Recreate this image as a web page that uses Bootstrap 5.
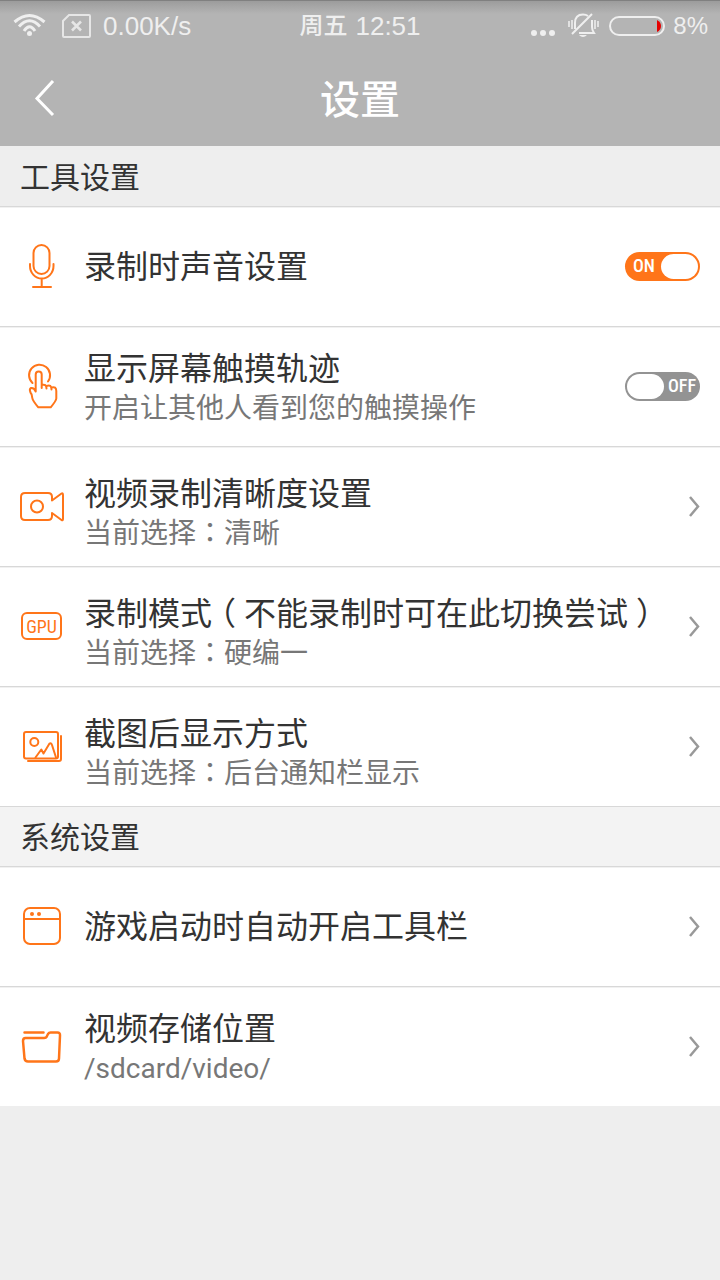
<!DOCTYPE html>
<html lang="zh-CN">
<head>
<meta charset="utf-8">
<meta name="viewport" content="width=device-width, initial-scale=1">
<title>设置</title>
<link href="https://cdn.jsdelivr.net/npm/bootstrap@5.3.0/dist/css/bootstrap.min.css" rel="stylesheet">
<style>
  :root { --accent: #ff7519; --ink: #333; --line: #d8d8d8; }
  body { background: #eee; color: var(--ink); font-family: Roboto, "Noto Sans CJK SC", sans-serif; }
  .top-area { background: linear-gradient(#808080 0, #808080 1px, #9c9c9c 1px, #b4b4b4 14px); color: #fff; }
  .status-bar { height: 52px; padding: 0 12px; color: #efefef; font: 26px/32px "Liberation Sans", "Noto Sans CJK SC", sans-serif; }
  .status-day, .battery-level { font-size: 24px; }
  .status-day { font-weight: 500; }
  .toolbar { height: 94px; padding: 0 24px; }
  .toolbar h1 { padding-top: 4px; font-size: 40px; line-height: 48px; font-weight: 500; }
  .side-slot { width: 40px; }
  .section-title { height: 60px; padding: 3px 20px 0; font-size: 30px; line-height: 40px; font-weight: 400; }
  .section-title.first { height: 61px; }
  .section-title.pale { background: #f3f3f3; }
  .section-title, .entry { border-bottom: 1px solid var(--line); }
  .entry { min-height: 120px; padding-right: 20px; background: #fff; box-shadow: inset 0 1px #f1f1f1; color: var(--ink); text-decoration: none; }
  li:last-child > .entry.last { min-height: 119px; border-bottom: 0; }
  .entry-icon { width: 44px; height: 48px; margin: 0 20px; flex: none; fill: none; stroke: var(--accent); stroke-width: 2; stroke-linecap: round; stroke-linejoin: round; }
  .entry-icon text { font: 18px "Roboto Condensed", Roboto, sans-serif; fill: var(--accent); stroke: none; }
  .entry-title { font-size: 32px; line-height: 40px; }
  .entry-note { font-size: 28px; line-height: 40px; color: #777; }
  .two-line { padding-top: 4px; }
  .lowered { padding-top: 14px; }
  .mid-mark { font-family: Roboto, "Noto Sans CJK TC", sans-serif; }
  .bracket { display: inline-block; width: 1em; text-align: center; font-feature-settings: "halt"; }
  .chevron { flex: none; fill: none; stroke: #999; stroke-width: 2.5; }
  .toggle { flex: none; width: 75px; height: 29px; }
  .toggle input { display: block; appearance: none; width: 75px; height: 29px; margin: 0; border-radius: 15px; background: #939393; cursor: pointer; overflow: hidden; }
  .toggle input:checked { background: var(--accent); }
  .toggle input::before { content: ""; display: block; width: 37px; height: 25px; margin: 2px; border-radius: 13px; background: #fff; }
  .toggle input:checked::before { margin-left: 36px; }
  .toggle span { position: absolute; top: 0; right: 4px; color: #fff; font: 500 18px/28px "Roboto Condensed", "Liberation Sans Narrow", sans-serif; pointer-events: none; }
  .toggle input:checked + span { right: auto; left: 8px; }
</style>
</head>
<body>
<header class="top-area">
  <div class="status-bar d-flex align-items-center">
    <div class="d-flex align-items-center col">
      <svg width="34" height="26" viewBox="0 0 34 26" fill="none" stroke="#efefef" stroke-width="3" aria-hidden="true">
        <path d="M2.500 9Q17.500-4 32.500 9M7 13.500Q17.500 2 28 13.500M12 18Q17.500 9.500 23 18"/><circle cx="17.500" cy="20.500" r="2.500" fill="#efefef" stroke="none"/>
      </svg>
      <svg class="ms-3 me-2" width="29" height="24" viewBox="0 0 29 24" fill="none" stroke="#e6e6e6" stroke-width="2" aria-hidden="true">
        <path d="M7 1H27Q28 1 28 2V22Q28 23 27 23H2Q1 23 1 22V7Z"/><path d="M10 7.500l9 9M19 7.500l-9 9" stroke-width="2.500"/>
      </svg>
      <span class="ms-1">0.00K/s</span>
    </div>
    <div class="d-flex gap-2 align-items-center"><span class="status-day">周五</span><span>12:51</span></div>
    <div class="d-flex align-items-center justify-content-end col">
      <svg width="26" height="26" viewBox="0 0 26 26" fill="#efefef" aria-hidden="true"><circle cx="4" cy="20" r="3"/><circle cx="13" cy="20" r="3"/><circle cx="22" cy="20" r="3"/></svg>
      <svg class="mx-2" width="37" height="26" viewBox="0 0 37 26" fill="none" stroke="#efefef" stroke-width="2" aria-hidden="true">
        <path d="M11 16V10Q11 1.500 19 1.500Q22 1.500 24 3M28 7V14Q28 17 30 20H15M8 21L28 1"/><path d="M5 8v6M8 7v9M31 7v9M34 8v6" stroke-width="1.500"/><path d="M15 22H23Q19 26 15 22Z" fill="#efefef" stroke="none"/>
      </svg>
      <svg width="56" height="20" viewBox="0 0 56 20" fill="none" aria-hidden="true"><rect x="1" y="1" width="54" height="18" rx="9" stroke="#efefef" stroke-width="2"/><path d="M48 4Q52 6 52 10T48 16Z" fill="#e60000"/></svg>
      <span class="battery-level ms-2">8%</span>
    </div>
  </div>
  <nav class="toolbar d-flex align-items-center justify-content-between" aria-label="标题栏">
    <button type="button" class="btn p-0 border-0 side-slot" aria-label="返回">
      <svg class="d-block mx-auto" width="22" height="38" viewBox="0 0 22 38" fill="none" stroke="#fff" stroke-width="3"><path d="M20 1L4 18.500L20 35"/></svg>
    </button>
    <h1 class="m-0">设置</h1>
    <span class="side-slot"></span>
  </nav>
</header>
<main>
  <h2 class="section-title first d-flex align-items-center m-0">工具设置</h2>
  <ul class="list-unstyled m-0">
    <li>
      <div class="entry d-flex align-items-center">
        <svg class="entry-icon" viewBox="0 0 44 48" aria-hidden="true"><rect x="13.500" y="2" width="16" height="29" rx="8"/><path d="M10 21v2a11.700 12.500 0 0 0 23.500 0v-2M21.700 36v8M13 44h18"/></svg>
        <label class="entry-title flex-fill" for="sound">录制时声音设置</label>
        <div class="toggle position-relative"><input type="checkbox" role="switch" id="sound" checked><span>ON</span></div>
      </div>
    </li>
    <li>
      <div class="entry d-flex align-items-center">
        <svg class="entry-icon" viewBox="0 0 44 48" aria-hidden="true"><path d="M12.500 20A10.500 10.500 0 1 1 28 18.500"/><path d="M15.700 28.500V11.500a3 3 0 0 1 6 0V25M21.700 22Q26.500 20.500 26.500 25.500M26.500 23Q31.500 21 31.500 26.500M31.500 24.500Q36.300 23 36.300 28V35.500Q36 38 30.700 44.300H18.300Q12.500 37.500 12.300 35Q12.300 31.500 10.500 29.500Q9 26 11 25Q14 24.500 15.700 28.500"/></svg>
        <label class="flex-fill two-line" for="touch"><span class="entry-title d-block">显示屏幕触摸轨迹</span><span class="entry-note d-block">开启让其他人看到您的触摸操作</span></label>
        <div class="toggle position-relative"><input type="checkbox" role="switch" id="touch"><span>OFF</span></div>
      </div>
    </li>
    <li>
      <a href="#quality" class="entry d-flex align-items-center">
        <svg class="entry-icon" viewBox="0 0 44 48" aria-hidden="true"><path d="M32 17.500V14Q32 10 28 10H5Q1 10 1 14V33Q1 37 5 37H28Q32 37 32 33V30L41.500 37Q43 38 43 36V12Q43 9.500 41.500 10.500L32 17.500"/><circle cx="17" cy="23.500" r="6"/></svg>
        <span class="flex-fill lowered"><span class="entry-title d-block">视频录制清晰度设置</span><span class="entry-note d-block">当前选择<span class="mid-mark" lang="zh-TW">：</span>清晰</span></span>
        <svg class="chevron" width="12" height="22" viewBox="0 0 12 22" aria-hidden="true"><path d="M2 1l8 9.500l-8 9.500"/></svg>
      </a>
    </li>
    <li>
      <a href="#mode" class="entry d-flex align-items-center">
        <svg class="entry-icon" viewBox="0 0 44 48" aria-hidden="true"><rect x="2" y="10" width="39" height="26" rx="5"/><text x="21.500" y="30" text-anchor="middle">GPU</text></svg>
        <span class="flex-fill lowered"><span class="entry-title d-block">录制模式<span class="bracket">（</span>不能录制时可在此切换尝试<span class="bracket">）</span></span><span class="entry-note d-block">当前选择<span class="mid-mark" lang="zh-TW">：</span>硬编一</span></span>
        <svg class="chevron" width="12" height="22" viewBox="0 0 12 22" aria-hidden="true"><path d="M2 1l8 9.500l-8 9.500"/></svg>
      </a>
    </li>
    <li>
      <a href="#capture" class="entry d-flex align-items-center">
        <svg class="entry-icon" viewBox="0 0 44 48" aria-hidden="true"><rect x="4" y="9" width="34" height="26.500" rx="2"/><circle cx="14.300" cy="19" r="4"/><path d="M15.500 34.500L21.300 26.500L23.500 30.500L29.500 20.500Q31 19.500 32 22L36 34.500M41 13V36Q41 38 39 38H8"/></svg>
        <span class="flex-fill lowered"><span class="entry-title d-block">截图后显示方式</span><span class="entry-note d-block">当前选择<span class="mid-mark" lang="zh-TW">：</span>后台通知栏显示</span></span>
        <svg class="chevron" width="12" height="22" viewBox="0 0 12 22" aria-hidden="true"><path d="M2 1l8 9.500l-8 9.500"/></svg>
      </a>
    </li>
  </ul>
  <h2 class="section-title pale d-flex align-items-center m-0">系统设置</h2>
  <ul class="list-unstyled m-0">
    <li>
      <a href="#autostart" class="entry d-flex align-items-center">
        <svg class="entry-icon" viewBox="0 0 44 48" aria-hidden="true"><rect x="4" y="5" width="36" height="36" rx="6"/><path d="M4 16H40"/><g fill="#ff7519" stroke="none"><circle cx="12" cy="11" r="2"/><circle cx="19" cy="11" r="2"/></g></svg>
        <span class="flex-fill entry-title">游戏启动时自动开启工具栏</span>
        <svg class="chevron" width="12" height="22" viewBox="0 0 12 22" aria-hidden="true"><path d="M2 1l8 9.500l-8 9.500"/></svg>
      </a>
    </li>
    <li>
      <a href="#storage" class="entry last d-flex align-items-center">
        <svg class="entry-icon" viewBox="0 0 44 48" aria-hidden="true"><path stroke-width="2.500" d="M4.500 9.500H23.500M5.500 15H24Q26.500 15 27 13L28 11Q29 9.500 30.500 9.500H37.500Q40.200 9.500 40 12.500L39 35.500Q39 38.500 36 38.500H8Q5 38.500 4.500 35.500L3 18Q3 15 5.500 15Z"/></svg>
        <span class="flex-fill two-line"><span class="entry-title d-block">视频存储位置</span><span class="entry-note d-block">/sdcard/video/</span></span>
        <svg class="chevron" width="12" height="22" viewBox="0 0 12 22" aria-hidden="true"><path d="M2 1l8 9.500l-8 9.500"/></svg>
      </a>
    </li>
  </ul>
</main>
<script src="https://cdn.jsdelivr.net/npm/bootstrap@5.3.0/dist/js/bootstrap.bundle.min.js"></script>
</body>
</html>
